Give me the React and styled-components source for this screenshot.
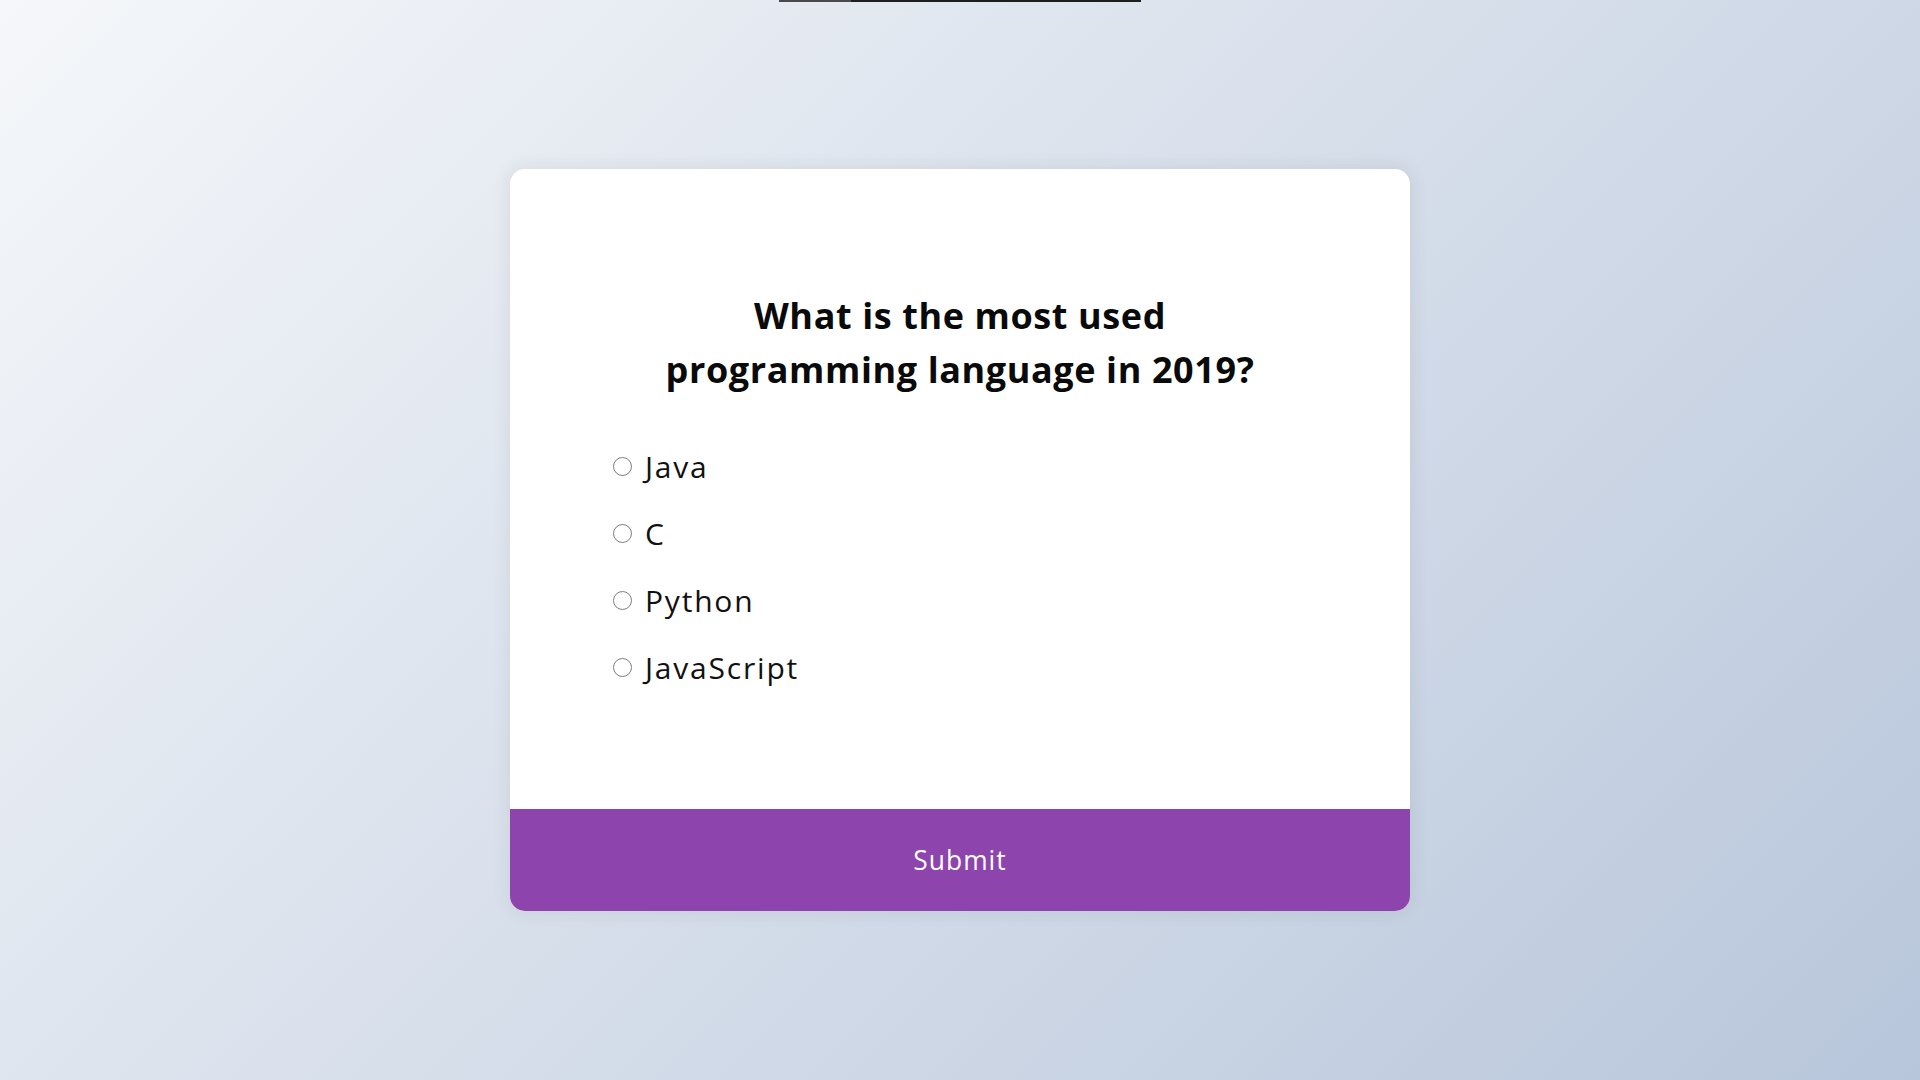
import React, { useState } from "react";
import styled, { createGlobalStyle } from "styled-components";

const GlobalStyle = createGlobalStyle`
  * { box-sizing: border-box; }
  html, body { height: 100%; }
  body {
    margin: 0;
    min-height: 100vh;
    font-family: "Open Sans", "Liberation Sans", sans-serif;
    background-color: #b8c6db;
    background-image: linear-gradient(315deg, #b8c6db 0%, #f5f7fa 100%);
    background-attachment: fixed;
  }
  #root { min-height: 100vh; }
`;

const Page = styled.div`
  min-height: 100vh;
  display: flex;
  align-items: center;
  justify-content: center;
`;

const TopStrip = styled.div`
  position: fixed;
  top: 0;
  left: 779px;
  width: 362px;
  height: 2px;
  display: flex;
`;

const StripPart = styled.span`
  flex: ${(p) => p.$grow};
  background: ${(p) => p.$color};
`;

const Card = styled.div`
  width: 900px;
  background: #fff;
  border-radius: 15px;
  box-shadow: 0 0 15px 3px rgba(100, 100, 100, 0.1);
  overflow: hidden;
`;

const Header = styled.div`
  padding: 96px;
`;

const Question = styled.h2`
  margin: 0;
  padding: 24px;
  text-align: center;
  font-size: 36px;
  line-height: 54px;
  font-weight: 700;
  letter-spacing: 0.6px;
  color: #0a0a0a;
`;

const Options = styled.ul`
  list-style: none;
  margin: 24px 0;
  padding: 0;
`;

const Option = styled.li`
  font-size: 30px;
  line-height: 43.2px;
  letter-spacing: 1.8px;
  margin: 24px 0;
  color: #111;
  display: flex;
  align-items: center;
`;

const Radio = styled.input`
  appearance: none;
  width: 19px;
  height: 19px;
  margin: 0 13px 0 7px;
  border: 1.5px solid #7d7d7d;
  border-radius: 50%;
  background: #fff;
  flex: none;
  position: relative;
  top: 0;
  cursor: pointer;
  &:checked {
    border-color: #0075ff;
    box-shadow: inset 0 0 0 3px #fff;
    background: #0075ff;
  }
`;

const Label = styled.label`
  cursor: pointer;
`;

const SubmitButton = styled.button`
  display: block;
  width: 100%;
  border: none;
  background-color: #8e44ad;
  color: #fff;
  font-family: inherit;
  font-size: 26.4px;
  line-height: 39.6px;
  letter-spacing: 1px;
  padding: 31.2px;
  cursor: pointer;
`;

const answers = [
  { id: "a", text: "Java" },
  { id: "b", text: "C" },
  { id: "c", text: "Python" },
  { id: "d", text: "JavaScript" },
];

export default function App() {
  const [picked, setPicked] = useState(null);
  return (
    <>
      <GlobalStyle />
      <TopStrip>
        <StripPart $grow={72} $color="#4a4a4a" />
        <StripPart $grow={290} $color="#1e1e1e" />
      </TopStrip>
      <Page>
        <Card>
          <Header>
            <Question>
              What is the most used
              <br />
              programming language in 2019?
            </Question>
            <Options>
              {answers.map((a) => (
                <Option key={a.id}>
                  <Radio
                    type="radio"
                    name="answer"
                    id={a.id}
                    checked={picked === a.id}
                    onChange={() => setPicked(a.id)}
                  />
                  <Label htmlFor={a.id}>{a.text}</Label>
                </Option>
              ))}
            </Options>
          </Header>
          <SubmitButton>Submit</SubmitButton>
        </Card>
      </Page>
    </>
  );
}
